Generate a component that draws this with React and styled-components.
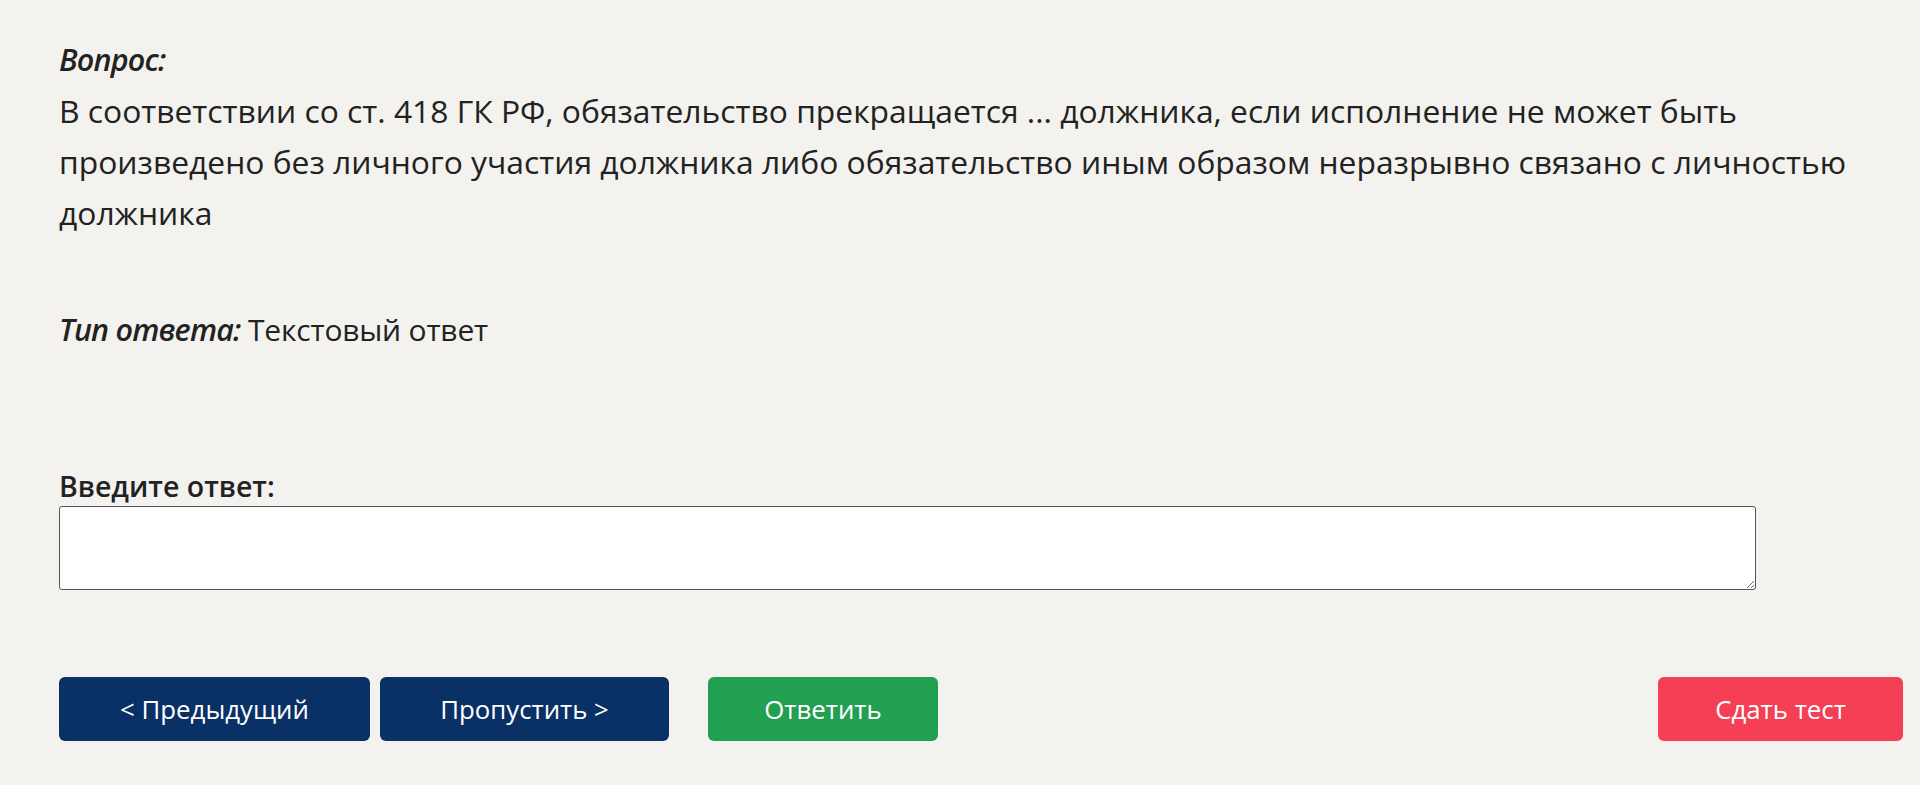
import React, { useState } from "react";
import styled, { createGlobalStyle } from "styled-components";

const GlobalStyle = createGlobalStyle`
    html, body {
        margin: 0;
        padding: 0;
        background: #f3f2ef;
    }
    body {
        font-family: "Open Sans", "Noto Sans", sans-serif;
        color: #222;
    }
`;

function App() {
    const [answer, setAnswer] = useState("");

    return (
        <>
            <GlobalStyle />
            <Page>
                <Question>
                    <Label>Вопрос:</Label>
                    <Text>
                        В соответствии со ст. 418 ГК РФ, обязательство
                        прекращается ... должника, если исполнение не может
                        быть произведено без личного участия должника либо
                        обязательство иным образом неразрывно связано с
                        личностью должника
                    </Text>
                </Question>

                <AnswerType>
                    <Label as="span">Тип ответа:</Label> Текстовый ответ
                </AnswerType>

                <Field>
                    <FieldLabel htmlFor="answer">Введите ответ:</FieldLabel>
                    <Input
                        id="answer"
                        value={answer}
                        onChange={(e) => setAnswer(e.target.value)}
                    />
                </Field>

                <Actions>
                    <Button variant="navy" w="311px">
                        &lt; Предыдущий
                    </Button>
                    <Button variant="navy" w="289px">
                        Пропустить &gt;
                    </Button>
                    <Button variant="green" w="230px" gap="39px">
                        Ответить
                    </Button>
                    <Spacer />
                    <Button variant="red" w="245px">
                        Сдать тест
                    </Button>
                </Actions>
            </Page>
        </>
    );
}

const colors = {
    navy: "#0a3166",
    green: "#22a052",
    red: "#f43f55",
};

const Page = styled.div`
    padding: 34px 17px 44px 59px;
    display: flex;
    flex-direction: column;
`;
const Question = styled.div`
    max-width: 1812px;
    line-height: 51px;
`;
const Label = styled.div`
    font-size: 30.5px;
    font-style: italic;
    font-weight: 600;
    letter-spacing: -0.8px;
`;
const Text = styled.p`
    margin: 0;
    font-size: 31.8px;
`;
const AnswerType = styled.div`
    margin-top: 66px;
    font-size: 30px;
    letter-spacing: -0.2px;
    line-height: 51px;
`;
const Field = styled.div`
    margin-top: 113px;
    display: flex;
    flex-direction: column;
    gap: 2px;
`;
const FieldLabel = styled.label`
    font-size: 28.5px;
    font-weight: 600;
    line-height: 36px;
`;
const Input = styled.textarea`
    width: 1697px;
    height: 84px;
    box-sizing: border-box;
    border: 1px solid #555;
    border-radius: 3px;
    background: #fff;
    font-family: inherit;
    font-size: 24px;
    padding: 8px 12px;
`;
const Actions = styled.div`
    margin-top: 87px;
    display: flex;
    align-items: center;
    gap: 10px;
`;
const Spacer = styled.div`
    flex: 1;
`;
const Button = styled.button`
    width: ${(p) => p.w};
    height: 64px;
    margin-left: ${(p) => (p.gap ? `calc(${p.gap} - 10px)` : "0")};
    border: none;
    border-radius: 6px;
    background: ${(p) => colors[p.variant]};
    color: #fff;
    font-family: inherit;
    font-size: 25.8px;
    cursor: pointer;
`;

export default App;
